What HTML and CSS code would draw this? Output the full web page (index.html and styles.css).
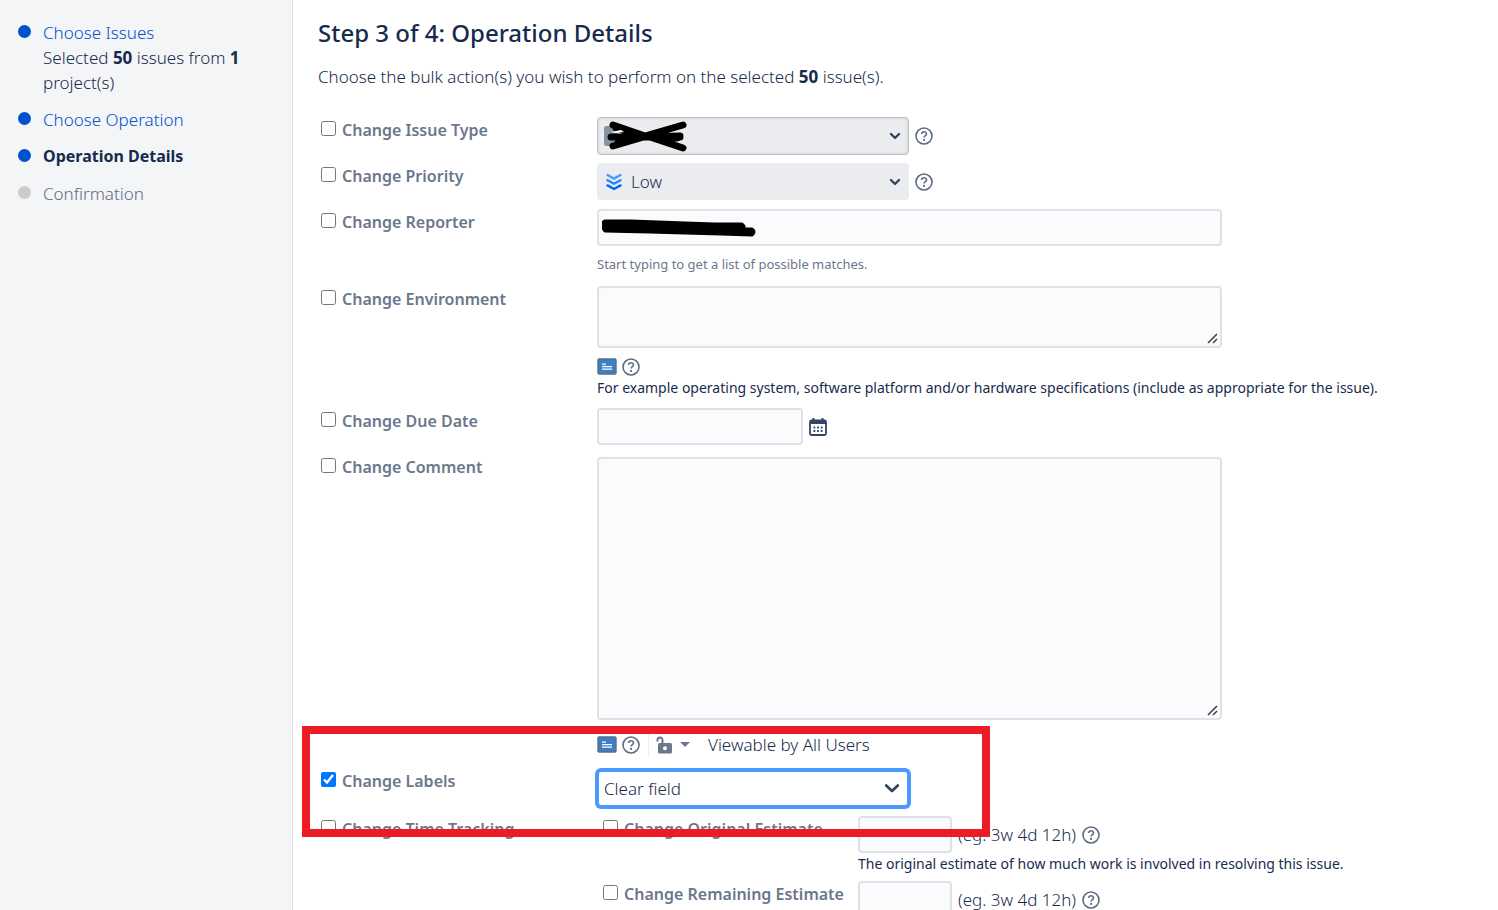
FILE: index.html
```
<!DOCTYPE html>
<html lang="en">
<head>
    <meta charset="UTF-8">
    <meta name="viewport" content="width=device-width, initial-scale=1.0">
    <title>Bulk Operation - Operation Details</title>
    <link rel="stylesheet" href="styles.css">
</head>
<body>
    <!-- Shared icons -->
    <svg class="icon-defs" aria-hidden="true">
        <symbol id="icon-help" viewBox="0 0 18 18">
            <circle cx="9" cy="9" r="8" fill="none" stroke="#5e6c84" stroke-width="1.6"/>
            <path d="M6.6 7.1c0-3.2 4.9-3 4.9-.2 0 1.8-2.4 1.7-2.4 3.7" fill="none" stroke="#5e6c84" stroke-width="1.6"/>
            <circle cx="9" cy="12.9" r="1.1" fill="#5e6c84"/>
        </symbol>
        <symbol id="icon-chevron" viewBox="0 0 12 8">
            <path d="M2 2l4 4 4-4" fill="none" stroke="#344563" stroke-width="2.4" stroke-linecap="round" stroke-linejoin="round"/>
        </symbol>
        <symbol id="icon-chevron-large" viewBox="0 0 16 11">
            <path d="M2.200 2.500L8 8l5.800-5.500" fill="none" stroke="#344563" stroke-width="2.800" stroke-linecap="round" stroke-linejoin="round"/>
        </symbol>
        <symbol id="icon-preview" viewBox="0 0 20 17">
            <rect x="1" y="1" width="18" height="15" rx="1" fill="#3b7fc4" stroke="#5e6c84" stroke-width="1.4"/>
            <path d="M5 6.2h4M5 8.7h10M5 11.2h10" stroke="#fff" stroke-width="1.3"/>
        </symbol>
    </svg>

    <div class="layout">
        <nav class="sidebar">
            <ol class="steps">
                <li>
                    <span class="dot"></span>
                    <div><a href="#">Choose Issues</a><br>Selected <strong>50</strong> issues from <strong>1</strong> project(s)</div>
                </li>
                <li><span class="dot"></span><a href="#">Choose Operation</a></li>
                <li><span class="dot"></span><strong>Operation Details</strong></li>
                <li class="pending"><span class="dot"></span>Confirmation</li>
            </ol>
        </nav>

        <main class="content">
            <h1>Step 3 of 4: Operation Details</h1>
            <p class="intro">Choose the bulk action(s) you wish to perform on the selected <strong>50</strong> issue(s).</p>

            <form class="fields">
                <div class="row">
                    <label class="check"><input type="checkbox">Change Issue Type</label>
                    <div class="inline">
                        <div class="select-box">
                            <select class="outlined" aria-label="Issue type"><option></option></select>
                            <svg class="scribble" width="86" height="32" viewBox="0 0 86 32">
                                <rect x="0" y="6" width="14" height="20" rx="2" fill="#8993a4"/>
                                <path d="M9 5l32 11 38-11M7 17h69M9 26l34-10 36 12M12 8l30 9 34-1M14 23l29-7 30 2" fill="none" stroke="#000" stroke-width="7" stroke-linecap="round" stroke-linejoin="round"/>
                                <path d="M7 12l10-2 3 2-8 1z" fill="#fff"/>
                            </svg>
                            <svg class="chevron"><use href="#icon-chevron"/></svg>
                        </div>
                        <a class="help" href="#" aria-label="Issue type help"><svg><use href="#icon-help"/></svg></a>
                    </div>
                </div>

                <div class="row">
                    <label class="check"><input type="checkbox">Change Priority</label>
                    <div class="inline">
                        <div class="select-box">
                            <select class="with-icon" aria-label="Priority"><option>Low</option></select>
                            <svg class="priority" viewBox="0 0 16 18" fill="none" stroke-width="2.4" stroke-linecap="round" stroke-linejoin="round">
                                <path d="M1.5 2L8 5.600l6.500-3.600" stroke="#4c9aff"/>
                                <path d="M1.500 7.200L8 10.800l6.500-3.600" stroke="#2684ff"/>
                                <path d="M1.500 12.400L8 16l6.500-3.600" stroke="#0065ff"/>
                            </svg>
                            <svg class="chevron"><use href="#icon-chevron"/></svg>
                        </div>
                        <a class="help" href="#" aria-label="Priority help"><svg><use href="#icon-help"/></svg></a>
                    </div>
                </div>

                <div class="row">
                    <label class="check"><input type="checkbox">Change Reporter</label>
                    <div>
                        <div class="text-box">
                            <input type="text" aria-label="Reporter">
                            <svg class="redaction" width="154" height="22" viewBox="0 0 154 22">
                                <path d="M3 3h26l27 1 27 1 30 1h27l2 2v3h8q4 3 0 6l-31-1-36-1-36-1-44-1q-3-3-1-6-2-3 1-4z" fill="#000" stroke="#000" stroke-width="3" stroke-linejoin="round"/>
                            </svg>
                        </div>
                        <p class="hint">Start typing to get a list of possible matches.</p>
                    </div>
                </div>

                <div class="row">
                    <label class="check"><input type="checkbox">Change Environment</label>
                    <div>
                        <textarea class="short" aria-label="Environment"></textarea>
                        <div class="tools">
                            <button type="button" aria-label="Preview"><svg class="preview"><use href="#icon-preview"/></svg></button>
                            <a class="help" href="#" aria-label="Formatting help"><svg><use href="#icon-help"/></svg></a>
                        </div>
                        <p class="description">For example operating system, software platform and/or hardware specifications (include as appropriate for the issue).</p>
                    </div>
                </div>

                <div class="row">
                    <label class="check"><input type="checkbox">Change Due Date</label>
                    <div class="inline">
                        <input type="text" class="date" aria-label="Due date">
                        <button type="button" aria-label="Select a date">
                            <svg class="calendar" viewBox="0 0 18 18">
                                <path d="M4.500 0v3M13.500 0v3" stroke="#344563" stroke-width="2"/>
                                <rect x="1" y="2.500" width="16" height="14.500" rx="1.500" fill="#fff" stroke="#344563" stroke-width="1.800"/>
                                <path d="M1 2.500h16v3.500H1z" fill="#344563"/>
                                <path d="M4.500 9.500h9M4.500 13h9" stroke="#344563" stroke-width="1.800" stroke-dasharray="1.800 1.800"/>
                            </svg>
                        </button>
                    </div>
                </div>

                <div class="row">
                    <label class="check"><input type="checkbox">Change Comment</label>
                    <div class="comment">
                        <textarea class="tall" aria-label="Comment"></textarea>
                        <div class="tools">
                            <button type="button" aria-label="Preview"><svg class="preview"><use href="#icon-preview"/></svg></button>
                            <a class="help" href="#" aria-label="Formatting help"><svg><use href="#icon-help"/></svg></a>
                            <button type="button" class="security" aria-label="Comment visibility">
                                <svg class="lock" viewBox="0 0 16 18">
                                    <path d="M1.500 5.500V4a2.500 2.500 0 0 1 5 0V8" fill="none" stroke="#6b778c" stroke-width="2"/>
                                    <rect x="2" y="7" width="14" height="10.500" rx="1.500" fill="#6b778c"/>
                                    <circle cx="9" cy="12.300" r="2" fill="#fff"/>
                                </svg>
                                <svg class="caret" viewBox="0 0 10 5"><path d="M0 0h10L5 5z" fill="#6b778c"/></svg>
                            </button>
                            <span>Viewable by All Users</span>
                        </div>
                    </div>
                </div>

                <div class="row">
                    <label class="check"><input type="checkbox" checked>Change Labels</label>
                    <div class="labels">
                        <div class="select-box">
                            <select class="focused" aria-label="Labels action"><option>Clear field</option></select>
                            <svg class="chevron large"><use href="#icon-chevron-large"/></svg>
                        </div>
                    </div>
                </div>

                <div class="row">
                    <label class="check"><input type="checkbox">Change Time Tracking</label>
                    <div class="estimates">
                        <label class="check"><input type="checkbox">Change Original Estimate</label>
                        <div>
                            <div class="inline">
                                <input type="text" class="estimate" aria-label="Original estimate">
                                <span>(eg. 3w 4d 12h)</span>
                                <a class="help" href="#" aria-label="Original estimate help"><svg><use href="#icon-help"/></svg></a>
                            </div>
                            <p class="description">The original estimate of how much work is involved in resolving this issue.</p>
                        </div>
                        <label class="check"><input type="checkbox">Change Remaining Estimate</label>
                        <div class="inline">
                            <input type="text" class="estimate" aria-label="Remaining estimate">
                            <span>(eg. 3w 4d 12h)</span>
                            <a class="help" href="#" aria-label="Remaining estimate help"><svg><use href="#icon-help"/></svg></a>
                        </div>
                    </div>
                </div>
            </form>

            <div class="highlight"></div>
        </main>
    </div>
</body>
</html>
```
FILE: styles.css
```
* {
    box-sizing: border-box;
}

body {
    margin: 0;
    font-family: "Noto Sans", "Open Sans", sans-serif;
    font-size: 17px;
    font-weight: 300;
    line-height: 25px;
    color: #172b4d;
    background-color: #fff;
}

h1, p {
    margin: 0;
}

a {
    color: #0052cc;
    text-decoration: none;
}

strong {
    font-weight: 700;
}

button {
    display: flex;
    align-items: center;
    padding: 0;
    border: none;
    background: none;
    cursor: pointer;
}

.icon-defs {
    display: none;
}

.layout {
    display: flex;
    height: 100vh;
    overflow: hidden;
}

/* Step navigation */
.sidebar {
    flex: 0 0 293px;
    padding: 20px 40px 20px 18px;
    background-color: #f4f5f7;
    border-right: 1px solid #dfe1e6;
}

.steps {
    display: flex;
    flex-direction: column;
    gap: 12px;
    margin: 0;
    padding: 0;
    list-style: none;
}

.steps li {
    display: flex;
    gap: 12px;
}

.steps > li > strong {
    font-size: 16px;
}

.dot {
    flex: none;
    width: 13px;
    height: 13px;
    margin-top: 5px;
    border-radius: 50%;
    background-color: #0052cc;
}

.pending {
    color: #5e6c84;
}

.pending .dot {
    background-color: #ccc;
}

/* Main form */
.content {
    position: relative;
    flex: 1;
    min-width: 0;
    padding: 16px 25px 0;
}

h1 {
    font-size: 24px;
    font-weight: 500;
    line-height: 34px;
}

.intro {
    margin-top: 14px;
}

.fields {
    display: flex;
    flex-direction: column;
    gap: 9px;
    margin-top: 28px;
}

.row {
    display: grid;
    grid-template-columns: 276px 1fr;
    padding-left: 3px;
}

.check {
    display: flex;
    align-items: center;
    align-self: start;
    gap: 6px;
    padding-top: 1px;
    font-size: 16px;
    font-weight: 600;
    color: #6b778c;
    white-space: nowrap;
}

.check input {
    width: 15px;
    height: 15px;
    margin: 0 0 4px;
}

.inline {
    display: flex;
    align-items: center;
    gap: 6px;
}

.select-box,
.text-box {
    position: relative;
}

.select-box {
    width: 312px;
}

input[type="text"],
textarea,
select {
    display: block;
    width: 100%;
    height: 37px;
    padding: 4px 7px;
    font: inherit;
    color: inherit;
    background-color: #fafbfc;
    border: 2px solid #dfe1e6;
    border-radius: 4px;
}

input[type="text"],
textarea {
    max-width: 625px;
}

textarea::-webkit-resizer {
    background: url("data:image/svg+xml,%3Csvg xmlns='http://www.w3.org/2000/svg' width='15' height='15'%3E%3Cpath d='M3 12l9-9M8 12l4-4' stroke='%23444' stroke-width='1.6'/%3E%3C/svg%3E") no-repeat;
}

select {
    appearance: none;
    background-color: #ebecf0;
    border-color: #ebecf0;
}

select.outlined {
    height: 38px;
    margin-bottom: -1px;
    border: 1px solid #c1c1c1;
    box-shadow: inset 0 0 3px #c1c1c1;
}

select.with-icon {
    padding-left: 32px;
}

select.focused {
    padding-left: 5px;
    background-color: #fff;
    border-color: #4c9aff;
    box-shadow: 0 0 0 2px #4c9aff;
    outline: none;
}

.chevron {
    position: absolute;
    top: 15px;
    right: 8px;
    width: 12px;
    height: 8px;
    pointer-events: none;
}

.chevron.large {
    top: 13px;
    right: 9px;
    width: 16px;
    height: 11px;
}

.priority {
    position: absolute;
    top: 10px;
    left: 9px;
    width: 16px;
    height: 18px;
    pointer-events: none;
}

.scribble {
    position: absolute;
    top: 3px;
    left: 7px;
    pointer-events: none;
}

.redaction {
    position: absolute;
    top: 9px;
    left: 5px;
    pointer-events: none;
}

.help,
.help svg {
    display: block;
    width: 18px;
    height: 18px;
}

.hint {
    margin-top: 6px;
    font-size: 13px;
    font-weight: 400;
    color: #6b778c;
}

.description {
    font-size: 14px;
    font-weight: 400;
    line-height: 22px;
}

textarea.short {
    height: 62px;
}

textarea.tall {
    height: 263px;
}

.tools {
    display: flex;
    align-items: center;
    gap: 5px;
    height: 29px;
    padding-top: 8px;
}

.preview {
    width: 20px;
    height: 17px;
}

input.date {
    width: 206px;
}

.calendar {
    width: 18px;
    height: 18px;
}

.comment {
    padding-top: 3px;
}

.comment .tools {
    height: 39px;
    padding-top: 10px;
}

.security {
    gap: 8px;
    height: 24px;
    margin: 0 13px 0 3px;
    padding-left: 7px;
    border-left: 1px solid #ebecf0;
}

.lock {
    width: 16px;
    height: 18px;
}

.caret {
    width: 10px;
    height: 5px;
}

.labels {
    padding-top: 2px;
}

.estimates {
    display: grid;
    grid-template-columns: 255px 1fr;
    row-gap: 6px;
    padding-left: 6px;
}

input.estimate {
    width: 94px;
}

/* Marks the labels field */
.highlight {
    position: absolute;
    top: 726px;
    left: 9px;
    width: 688px;
    height: 111px;
    border: 8px solid #ed1c24;
    pointer-events: none;
}
```
